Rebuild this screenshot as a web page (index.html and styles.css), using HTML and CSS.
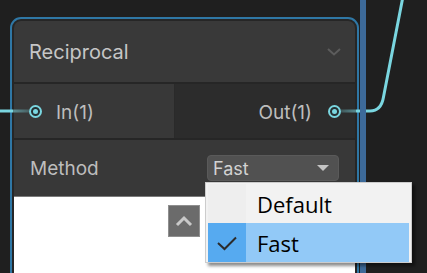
FILE: index.html
```html
<!DOCTYPE html>
<html lang="en">
    <head>
        <title>Reciprocal Node</title>
        <meta charset="utf-8" />
        <link rel="stylesheet" href="styles.css">
    </head>

    <body>
        <div class="graph">
            <div class="node">
                <div class="nodeHeader">
                    <span class="nodeTitle">Reciprocal</span>
                    <svg class="collapse" width="14" height="8" viewBox="0 0 14 8">
                        <polyline points="1,1 7,6.5 13,1" fill="none" stroke="#5c5c5c" stroke-width="2" />
                    </svg>
                </div>
                <div class="ports">
                    <div class="inputs">
                        <span class="portDot"></span>
                        <span class="portLabel">In(1)</span>
                    </div>
                    <div class="outputs">
                        <span class="portLabel">Out(1)</span>
                        <span class="portDot"></span>
                    </div>
                </div>
                <div class="controls">
                    <span class="controlLabel">Method</span>
                    <div class="dropdown">
                        <span>Fast</span>
                        <span class="arrow"></span>
                    </div>
                </div>
                <div class="preview">
                    <div class="previewToggle">
                        <svg width="18" height="12" viewBox="0 0 18 12">
                            <polyline points="2,10 9,3 16,10" fill="none" stroke="#c9c9c9" stroke-width="3" />
                        </svg>
                    </div>
                </div>
            </div>

            <!-- wires, drawn over the node border -->
            <svg class="edges" width="427" height="273" viewBox="0 0 427 273">
                <defs>
                    <linearGradient id="fadeIn" x1="0" x2="1" y1="0" y2="0">
                        <stop offset="0" stop-color="#7ad6e0" stop-opacity="0.55" />
                        <stop offset="1" stop-color="#7ad6e0" stop-opacity="0.25" />
                    </linearGradient>
                    <linearGradient id="fadeOut" x1="0" x2="1" y1="0" y2="0">
                        <stop offset="0" stop-color="#7ad6e0" stop-opacity="0.25" />
                        <stop offset="1" stop-color="#7ad6e0" stop-opacity="0.55" />
                    </linearGradient>
                </defs>
                <line x1="0" y1="111" x2="13" y2="111" stroke="#7ad6e0" stroke-width="3" />
                <rect x="13" y="109.5" width="16" height="3" fill="url(#fadeIn)" />
                <rect x="341" y="109.5" width="15" height="3" fill="url(#fadeOut)" />
                <path d="M356 111 H370 C378 111 382 106 383.5 97 L402.5 -1" fill="none" stroke="#7ad6e0" stroke-width="3" />
            </svg>

            <div class="stackLine"></div>

            <div class="menu">
                <div class="menuItem">
                    <span class="checkCol"></span>
                    <span class="menuText">Default</span>
                </div>
                <div class="menuItem selected">
                    <span class="checkCol">
                        <svg width="22" height="16" viewBox="0 0 22 16">
                            <polyline points="2,8 8.5,14 20,2.5" fill="none" stroke="#2b2b2b" stroke-width="2" />
                        </svg>
                    </span>
                    <span class="menuText">Fast</span>
                </div>
            </div>
        </div>
    </body>
</html>
```

FILE: styles.css
```css
body {
    background-color: #1f1f1f;
    margin: 0;
    padding: 0;
    font-family: Inter, "Noto Sans", sans-serif;
}

.graph {
    position: relative;
    width: 427px;
    height: 273px;
    overflow: hidden;
}

.node {
    position: absolute;
    left: 10px;
    top: 17px;
    width: 349px;
    box-sizing: border-box;
    border: 2px solid #2f77a5;
    border-radius: 11px;
    padding: 2px;
    background-color: #262626;
}

.nodeHeader {
    display: flex;
    align-items: center;
    justify-content: space-between;
    height: 61px;
    padding: 0 14px 0 15px;
    background-color: #393939;
    border-radius: 7px 7px 0 0;
    margin-bottom: 2px;
}

.nodeTitle {
    font-size: 20px;
    color: #c6c6c6;
}

.ports {
    display: flex;
    height: 54px;
    margin-bottom: 2px;
}

.inputs {
    width: 161px;
    display: flex;
    align-items: center;
    gap: 14px;
    padding-left: 15px;
    box-sizing: border-box;
    background-color: #383838;
    border-right: 1px solid #2a2a2a;
}

.outputs {
    flex: 1;
    display: flex;
    align-items: center;
    justify-content: flex-end;
    gap: 16px;
    padding-right: 14px;
    background-color: #2c2c2c;
}

.portLabel {
    font-size: 19px;
    color: #bdbdbd;
    margin-top: 3px;
}

.portDot {
    position: relative;
    width: 13px;
    height: 13px;
    box-sizing: border-box;
    border: 2px solid #7ad6e0;
    border-radius: 50%;
    background-color: #263032;
}

.portDot::after {
    content: "";
    position: absolute;
    left: 2px;
    top: 2px;
    width: 5px;
    height: 5px;
    border-radius: 50%;
    background-color: #7ad6e0;
}

.controls {
    display: flex;
    align-items: center;
    height: 56px;
    padding: 0 16px;
    background-color: #383838;
    border-bottom: 1px solid #7a7a7a;
}

.controlLabel {
    font-size: 19px;
    color: #bdbdbd;
}

.dropdown {
    margin-left: auto;
    width: 132px;
    height: 26px;
    box-sizing: border-box;
    display: flex;
    align-items: center;
    justify-content: space-between;
    padding: 0 9px 0 5px;
    background-color: #515151;
    border: 1px solid #5a5a5a;
    border-radius: 4px;
    font-size: 18px;
    color: #d2d2d2;
}

.arrow {
    width: 0;
    height: 0;
    border-left: 6px solid transparent;
    border-right: 6px solid transparent;
    border-top: 6px solid #c4c4c4;
}

.preview {
    height: 100px;
    background-color: #ffffff;
    padding: 8px 0 0 154px;
    box-sizing: border-box;
}

.previewToggle {
    width: 32px;
    height: 32px;
    box-sizing: border-box;
    border: 1px solid #8f8f8f;
    background-color: #6b6b6b;
    display: flex;
    align-items: center;
    justify-content: center;
}

.edges {
    position: absolute;
    left: 0;
    top: 0;
}

.stackLine {
    position: absolute;
    left: 360px;
    top: 0;
    width: 6px;
    height: 273px;
    background-color: #3d6a99;
}

.menu {
    position: absolute;
    left: 205px;
    top: 182px;
    width: 207px;
    box-sizing: border-box;
    padding: 1px 2px 0;
    border: 1px solid #cccccc;
    background-color: #f2f2f2;
    box-shadow: 3px 3px 3px rgba(0, 0, 0, 0.45);
    font-family: "Open Sans", "Noto Sans", sans-serif;
}

.menuItem {
    display: flex;
    align-items: center;
    height: 39px;
}

.checkCol {
    width: 38px;
    height: 100%;
    display: flex;
    align-items: center;
    justify-content: center;
    background-color: #eeeeee;
}

.menuText {
    margin-left: 11px;
    font-size: 22px;
    color: #000000;
}

.selected {
    background-color: #92c9f7;
}

.selected .checkCol {
    background-color: #56aaf0;
}
```
